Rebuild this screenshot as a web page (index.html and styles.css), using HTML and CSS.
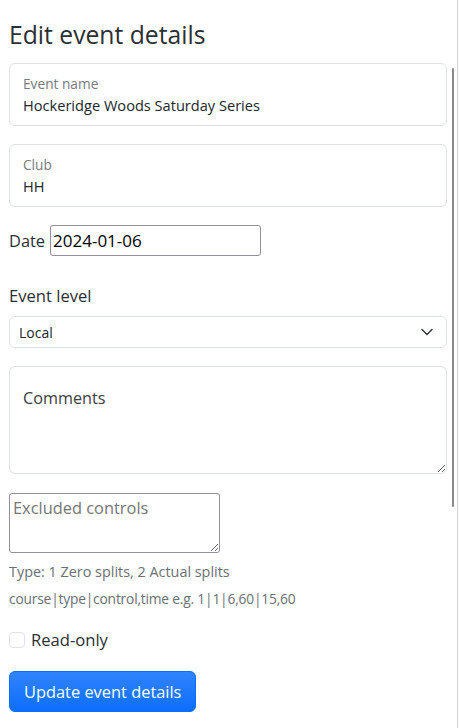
FILE: index.html
```html
<!DOCTYPE html>
<html lang="en">
<head>
<meta charset="utf-8">
<title>Edit event details</title>
<link rel="stylesheet" href="styles.css">
</head>
<body>
<div class="pane">
  <h2 class="title">Edit event details</h2>
  <form class="form">
    <div class="floating">
      <label class="float-label" for="ename">Event name</label>
      <input class="float-input" id="ename" type="text" value="Hockeridge Woods Saturday Series">
    </div>
    <div class="floating gap-top">
      <label class="float-label" for="club">Club</label>
      <input class="float-input" id="club" type="text" value="HH">
    </div>
    <div class="date-row">
      <label class="date-label" for="date">Date</label>
      <input class="date-input" id="date" type="text" value="2024-01-06">
    </div>
    <label class="level-label" for="level">Event level</label>
    <div class="select-wrap">
      <select class="select" id="level">
        <option>Local</option>
      </select>
      <svg class="chevron" viewBox="0 0 16 16" width="16" height="16" aria-hidden="true">
        <path d="m3 5.5 5 5 5-5" fill="none" stroke="#343a40" stroke-width="1.5" stroke-linecap="round" stroke-linejoin="round"/>
      </svg>
    </div>
    <textarea class="comments" placeholder="Comments"></textarea>
    <textarea class="excluded" placeholder="Excluded controls"></textarea>
    <div class="help first">Type: 1 Zero splits, 2 Actual splits</div>
    <div class="help second">course|type|control,time e.g. 1|1|6,60|15,60</div>
    <div class="check-row">
      <input class="check" type="checkbox" id="ro">
      <label class="check-label" for="ro">Read-only</label>
    </div>
    <button class="btn" type="button">Update event details</button>
  </form>
  <div class="thumb"></div>
</div>
</body>
</html>
```
FILE: styles.css
```css
html, body {
  margin: 0;
  padding: 0;
  background: #ffffff;
}
body {
  font-family: "Open Sans", "Noto Sans", "Liberation Sans", sans-serif;
  color: #212529;
  font-size: 16px;
}
.pane {
  position: relative;
  box-sizing: border-box;
  width: 458px;
  height: 728px;
  padding: 20px 11px 0 9px;
  border-right: 1px solid #cfcfcf;
  overflow: hidden;
}
.title {
  margin: 0 0 13px 0;
  font-size: 24.7px;
  line-height: 30px;
  font-weight: 400;
  color: #2b2f33;
}
.form {
  display: flex;
  flex-direction: column;
  align-items: flex-start;
}
.floating {
  box-sizing: border-box;
  width: 438px;
  height: 63px;
  border: 1px solid #dee2e6;
  border-radius: 6px;
  padding: 10px 13px 0 13px;
  display: flex;
  flex-direction: column;
}
.gap-top {
  margin-top: 18px;
}
.float-label {
  font-size: 13.7px;
  line-height: 19px;
  color: #777b7f;
}
.float-input {
  border: 0;
  padding: 0;
  margin: 0;
  outline: none;
  font: inherit;
  font-size: 14.6px;
  line-height: 24px;
  height: 24px;
  color: #212529;
  background: transparent;
}
.date-row {
  margin-top: 18px;
  display: flex;
  align-items: center;
  gap: 5px;
}
.date-label {
  font-size: 16.4px;
  line-height: 24px;
  color: #2b2f33;
}
.date-input {
  box-sizing: border-box;
  width: 211px;
  height: 31px;
  padding: 1px 2px;
  border: 1px solid #8f8f9d;
  border-radius: 3px;
  font: inherit;
  font-size: 17px;
  color: #000;
  background: #fff;
  outline: none;
}
.level-label {
  margin-top: 28px;
  font-size: 16.6px;
  line-height: 24px;
  color: #2b2f33;
}
.select-wrap {
  position: relative;
  margin-top: 8px;
  width: 438px;
}
.select {
  display: block;
  box-sizing: border-box;
  width: 438px;
  height: 32px;
  padding: 0 36px 0 9px;
  border: 1px solid #dee2e6;
  border-radius: 6px;
  font: inherit;
  font-size: 14px;
  color: #212529;
  background: #fff;
  appearance: none;
  -webkit-appearance: none;
  outline: none;
}
.chevron {
  position: absolute;
  right: 12px;
  top: 8px;
  pointer-events: none;
}
.comments {
  display: block;
  box-sizing: border-box;
  margin-top: 18px;
  width: 438px;
  height: 108px;
  padding: 19px 13px 0 13px;
  border: 1px solid #dee2e6;
  border-radius: 6px;
  font: inherit;
  font-size: 16.2px;
  line-height: 24px;
  color: #212529;
  background: #fff;
  outline: none;
}
.comments::placeholder {
  color: #3a3e42;
  opacity: 1;
}
.excluded {
  display: block;
  box-sizing: border-box;
  margin-top: 19px;
  width: 211px;
  height: 60px;
  padding: 2px 3px;
  border: 1px solid #8f8f9d;
  border-radius: 3px;
  font: inherit;
  font-size: 16.4px;
  line-height: 24px;
  color: #000;
  background: #fff;
  outline: none;
}
.excluded::placeholder {
  color: #767676;
  opacity: 1;
}
.help {
  font-size: 14.4px;
  line-height: 21px;
  color: #6c7075;
}
.help.second {
  font-size: 13.8px;
  letter-spacing: -0.2px;
  margin-top: 6px;
}
.help.first {
  margin-top: 8px;
}
.check-row {
  margin-top: 19px;
  display: flex;
  align-items: center;
  gap: 6px;
  height: 24px;
}
.check {
  box-sizing: border-box;
  width: 16px;
  height: 16px;
  margin: 0;
  border: 1px solid #dee2e6;
  border-radius: 4px;
  background: #fff;
  appearance: none;
  -webkit-appearance: none;
}
.check-label {
  font-size: 16.6px;
  line-height: 24px;
  color: #2b2f33;
}
.btn {
  margin-top: 19px;
  box-sizing: border-box;
  height: 41px;
  padding: 0 14px;
  border: 1px solid #0d6efd;
  border-radius: 6px;
  font: inherit;
  font-size: 16.4px;
  line-height: 24px;
  color: #fff;
  background: #0d6efd linear-gradient(180deg, rgba(255,255,255,0.15), rgba(255,255,255,0));
  cursor: pointer;
}
.thumb {
  position: absolute;
  left: 452px;
  top: 68px;
  width: 2px;
  height: 439px;
  background: #8a8a8a;
  border-radius: 1px;
}
```
